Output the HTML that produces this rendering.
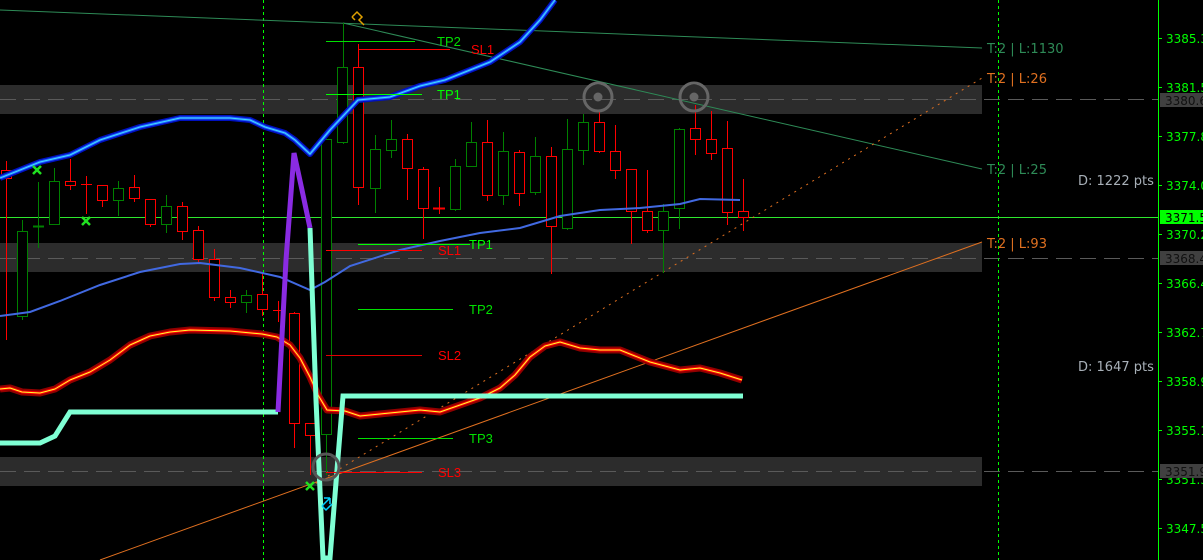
<!DOCTYPE html>
<html><head><meta charset="utf-8"><style>
html,body{margin:0;padding:0;background:#000;}
svg{display:block;font-family:"Liberation Sans",sans-serif;}
</style></head><body>
<svg width="1203" height="560" viewBox="0 0 1203 560" xmlns="http://www.w3.org/2000/svg">
<rect width="1203" height="560" fill="#000"/>
<rect x="0" y="85" width="982" height="29" fill="#2c2c2c"/>
<rect x="0" y="243" width="982" height="29" fill="#2c2c2c"/>
<rect x="0" y="457" width="982" height="29" fill="#2c2c2c"/>
<g stroke="#5a5a5a" stroke-width="1" stroke-dasharray="16,8">
<line x1="0" y1="99.5" x2="1158" y2="99.5"/>
<line x1="0" y1="258.5" x2="1158" y2="258.5"/>
<line x1="0" y1="471.5" x2="1158" y2="471.5"/>
</g>
<g stroke="#00ff00" stroke-width="1" stroke-dasharray="3,3" shape-rendering="crispEdges">
<line x1="263.5" y1="0" x2="263.5" y2="560"/>
<line x1="998.5" y1="0" x2="998.5" y2="560"/>
</g>
<line x1="0" y1="217.5" x2="1158" y2="217.5" stroke="#2ee82e" stroke-width="1"/>
<line x1="0" y1="10" x2="982" y2="48" stroke="#2e8b57" stroke-width="1"/>
<line x1="343" y1="23" x2="982" y2="169" stroke="#2e8b57" stroke-width="1"/>
<line x1="310" y1="487" x2="982" y2="78" stroke="#e07020" stroke-width="1" stroke-dasharray="2,5"/>
<line x1="100" y1="560" x2="982" y2="242" stroke="#e07020" stroke-width="1"/>
<g stroke-width="1" fill="#000" shape-rendering="crispEdges">
<g stroke="#ff0000">
<line x1="6.5" y1="161" x2="6.5" y2="340"/><rect x="1.5" y="170.5" width="10" height="8"/>
<line x1="70.5" y1="159" x2="70.5" y2="190"/><rect x="65.5" y="181.5" width="10" height="4"/>
<line x1="86.5" y1="176" x2="86.5" y2="214"/><line x1="81" y1="184.5" x2="92" y2="184.5"/>
<line x1="102.5" y1="185" x2="102.5" y2="207"/><rect x="97.5" y="185.5" width="10" height="15"/>
<line x1="134.5" y1="175" x2="134.5" y2="202"/><rect x="129.5" y="187.5" width="10" height="11"/>
<line x1="150.5" y1="199" x2="150.5" y2="227"/><rect x="145.5" y="199.5" width="10" height="25"/>
<line x1="182.5" y1="202" x2="182.5" y2="240"/><rect x="177.5" y="206.5" width="10" height="25"/>
<line x1="198.5" y1="226" x2="198.5" y2="263"/><rect x="193.5" y="230.5" width="10" height="29"/>
<line x1="214.5" y1="249" x2="214.5" y2="301"/><rect x="209.5" y="259.5" width="10" height="38"/>
<line x1="230.5" y1="290" x2="230.5" y2="308"/><rect x="225.5" y="297.5" width="10" height="5"/>
<line x1="262.5" y1="274" x2="262.5" y2="316"/><rect x="257.5" y="294.5" width="10" height="15"/>
<line x1="278.5" y1="301" x2="278.5" y2="322"/><line x1="273" y1="310.5" x2="284" y2="310.5"/>
<line x1="294.5" y1="312" x2="294.5" y2="448"/><rect x="289.5" y="313.5" width="10" height="110"/>
<line x1="310.5" y1="423" x2="310.5" y2="475"/><rect x="305.5" y="423.5" width="10" height="12"/>
<line x1="358.5" y1="44" x2="358.5" y2="205"/><rect x="353.5" y="67.5" width="10" height="120"/>
<line x1="407.5" y1="134" x2="407.5" y2="200"/><rect x="402.5" y="139.5" width="10" height="29"/>
<line x1="423.5" y1="167" x2="423.5" y2="239"/><rect x="418.5" y="169.5" width="10" height="39"/>
<line x1="439.5" y1="187" x2="439.5" y2="214"/><line x1="433" y1="208.5" x2="445" y2="208.5" stroke-width="2"/>
<line x1="487.5" y1="120" x2="487.5" y2="201"/><rect x="482.5" y="142.5" width="10" height="53"/>
<line x1="519.5" y1="150" x2="519.5" y2="206"/><rect x="514.5" y="152.5" width="10" height="41"/>
<line x1="551.5" y1="147" x2="551.5" y2="274"/><rect x="546.5" y="156.5" width="10" height="70"/>
<line x1="599.5" y1="110" x2="599.5" y2="153"/><rect x="594.5" y="122.5" width="10" height="29"/>
<line x1="615.5" y1="125" x2="615.5" y2="179"/><rect x="610.5" y="151.5" width="10" height="19"/>
<line x1="631.5" y1="169" x2="631.5" y2="244"/><rect x="626.5" y="169.5" width="10" height="42"/>
<line x1="647.5" y1="170" x2="647.5" y2="233"/><rect x="642.5" y="211.5" width="10" height="19"/>
<line x1="695.5" y1="105" x2="695.5" y2="155"/><rect x="690.5" y="128.5" width="10" height="11"/>
<line x1="711.5" y1="111" x2="711.5" y2="160"/><rect x="706.5" y="139.5" width="10" height="14"/>
<line x1="727.5" y1="121" x2="727.5" y2="225"/><rect x="722.5" y="148.5" width="10" height="64"/>
<line x1="743.5" y1="179" x2="743.5" y2="231"/><rect x="738.5" y="211.5" width="10" height="6"/>
</g>
<g stroke="#008000">
<line x1="22.5" y1="220" x2="22.5" y2="320"/><rect x="17.5" y="231.5" width="10" height="85"/>
<line x1="38.5" y1="182" x2="38.5" y2="248"/><line x1="33" y1="226.5" x2="44" y2="226.5" stroke-width="2"/>
<line x1="54.5" y1="168" x2="54.5" y2="224"/><rect x="49.5" y="181.5" width="10" height="43"/>
<line x1="118.5" y1="181" x2="118.5" y2="216"/><rect x="113.5" y="188.5" width="10" height="12"/>
<line x1="166.5" y1="195" x2="166.5" y2="233"/><rect x="161.5" y="206.5" width="10" height="18"/>
<line x1="246.5" y1="290" x2="246.5" y2="313"/><rect x="241.5" y="295.5" width="10" height="7"/>
<line x1="326.5" y1="139" x2="326.5" y2="475"/><rect x="321.5" y="139.5" width="10" height="295"/>
<line x1="343.5" y1="23" x2="343.5" y2="144"/><rect x="337.5" y="67.5" width="10" height="75"/>
<line x1="375.5" y1="135" x2="375.5" y2="213"/><rect x="370.5" y="149.5" width="10" height="39"/>
<line x1="391.5" y1="120" x2="391.5" y2="158"/><rect x="386.5" y="139.5" width="10" height="11"/>
<line x1="455.5" y1="159" x2="455.5" y2="211"/><rect x="450.5" y="166.5" width="10" height="43"/>
<line x1="471.5" y1="122" x2="471.5" y2="166"/><rect x="466.5" y="142.5" width="10" height="24"/>
<line x1="503.5" y1="132" x2="503.5" y2="205"/><rect x="498.5" y="151.5" width="10" height="44"/>
<line x1="535.5" y1="137" x2="535.5" y2="195"/><rect x="530.5" y="156.5" width="10" height="36"/>
<line x1="567.5" y1="119" x2="567.5" y2="230"/><rect x="562.5" y="149.5" width="10" height="79"/>
<line x1="583.5" y1="114" x2="583.5" y2="165"/><rect x="578.5" y="122.5" width="10" height="28"/>
<line x1="663.5" y1="204" x2="663.5" y2="273"/><rect x="658.5" y="211.5" width="10" height="19"/>
<line x1="679.5" y1="128" x2="679.5" y2="229"/><rect x="674.5" y="129.5" width="10" height="79"/>
</g>
</g>
<polyline fill="none" stroke="#4169e1" stroke-width="2" points="0,316 30,312 60,301 100,285 140,272 180,264 200,263 240,268 280,277 310,290 325,282 350,266 400,250 440,241 480,233 520,228 560,216 600,210 640,208 680,204 700,199 740,200"/>
<polyline fill="none" stroke="#0010c0" stroke-width="6" stroke-linejoin="round" points="0,178 40,162 70,155 100,140 140,127 180,118 230,118 250,120 265,127 285,133 295,140 310,154 330,130 358,100 390,97 420,86 445,80 490,62 520,42 540,20 555,0"/>
<polyline fill="none" stroke="#2060ff" stroke-width="3" stroke-linejoin="round" points="0,178 40,162 70,155 100,140 140,127 180,118 230,118 250,120 265,127 285,133 295,140 310,154 330,130 358,100 390,97 420,86 445,80 490,62 520,42 540,20 555,0"/>
<polyline fill="none" stroke="#40e0ff" stroke-width="1" points="0,178 40,162 70,155 100,140 140,127 180,118 230,118 250,120 265,127 285,133 295,140 310,154 330,130 358,100 390,97 420,86 445,80 490,62 520,42 540,20 555,0"/>
<g fill="none" stroke-linejoin="round">
<polyline stroke="#900000" stroke-width="7" points="0,389 10,388 22,392 40,393 55,389 70,380 90,372 110,360 130,345 150,336 170,332 190,330 230,331 262,334 277,337 290,345 300,358 310,377 318,395 327,410 345,411 360,416 380,414 420,410 440,412 460,405 480,398 500,388 515,375 530,357 545,346 560,342 580,348 600,350 620,350 650,362 680,370 700,368 720,373 742,380"/>
<polyline stroke="#ff0000" stroke-width="3" points="0,389 10,388 22,392 40,393 55,389 70,380 90,372 110,360 130,345 150,336 170,332 190,330 230,331 262,334 277,337 290,345 300,358 310,377 318,395 327,410 345,411 360,416 380,414 420,410 440,412 460,405 480,398 500,388 515,375 530,357 545,346 560,342 580,348 600,350 620,350 650,362 680,370 700,368 720,373 742,380"/>
<polyline stroke="#ffff30" stroke-width="1" points="0,389 10,388 22,392 40,393 55,389 70,380 90,372 110,360 130,345 150,336 170,332 190,330 230,331 262,334 277,337 290,345 300,358 310,377 318,395 327,410 345,411 360,416 380,414 420,410 440,412 460,405 480,398 500,388 515,375 530,357 545,346 560,342 580,348 600,350 620,350 650,362 680,370 700,368 720,373 742,380"/>
</g>
<polyline fill="none" stroke="#7fffd4" stroke-width="5" points="0,443 40,443 55,436 70,412 278,412"/>
<polyline fill="none" stroke="#8a2be2" stroke-width="5" points="278,412 286,260 294,153 302,190 310,228"/>
<polyline fill="none" stroke="#7fffd4" stroke-width="5" points="310,228 316,400 323,558 330,558 337,470 343,396 743,396"/>
<g stroke-width="1" shape-rendering="crispEdges">
<line x1="326" y1="41.5" x2="415" y2="41.5" stroke="#00e000"/>
<line x1="358" y1="49.5" x2="450" y2="49.5" stroke="#ff0000"/>
<line x1="326" y1="94.5" x2="422" y2="94.5" stroke="#00ff00"/>
<line x1="358" y1="244.5" x2="470" y2="244.5" stroke="#00ff00"/>
<line x1="326" y1="250.5" x2="422" y2="250.5" stroke="#ff0000"/>
<line x1="358" y1="309.5" x2="453" y2="309.5" stroke="#00e000"/>
<line x1="326" y1="355.5" x2="422" y2="355.5" stroke="#e00000"/>
<line x1="358" y1="438.5" x2="453" y2="438.5" stroke="#00e000"/>
<line x1="326" y1="472.5" x2="422" y2="472.5" stroke="#ff0000"/>
</g>
<g font-size="13">
<text x="437" y="46" fill="#00e000">TP2</text>
<text x="471" y="54" fill="#ff0000">SL1</text>
<text x="437" y="99" fill="#00ff00">TP1</text>
<text x="469" y="249" fill="#00ff00">TP1</text>
<text x="438" y="255" fill="#ff0000">SL1</text>
<text x="469" y="314" fill="#00e000">TP2</text>
<text x="438" y="360" fill="#ff0000">SL2</text>
<text x="469" y="443" fill="#00e000">TP3</text>
<text x="438" y="477" fill="#ff0000">SL3</text>
</g>
<g fill="none" stroke="#666" stroke-width="3">
<circle cx="598" cy="97" r="14"/>
<circle cx="694" cy="97" r="14"/>
<circle cx="326" cy="467" r="13" stroke="#555"/>
</g>
<circle cx="598" cy="97" r="4.5" fill="#666"/>
<circle cx="694" cy="97" r="4.5" fill="#666"/>
<g stroke="#20e020" stroke-width="2.5">
<path d="M33 166 L41 174 M41 166 L33 174"/>
<path d="M82 217 L90 225 M90 217 L82 225"/>
<path d="M306 482 L314 490 M314 482 L306 490"/>
</g>
<path d="M352 17 L357 12 L362 17 L359 20 L364 25 M352 17 L355 20" fill="none" stroke="#e0a000" stroke-width="1.5"/>
<path d="M322 506 L330 498 M330 498 L324 498 M330 498 L330 504 M322 506 L326 510 L332 504" fill="none" stroke="#00d0ff" stroke-width="1.5"/>
<g font-size="13" font-family="DejaVu Sans, sans-serif">
<text x="987" y="53" fill="#2e8b57">T:2 | L:1130</text>
<text x="987" y="83" fill="#e07020">T:2 | L:26</text>
<text x="987" y="174" fill="#2e8b57">T:2 | L:25</text>
<text x="987" y="248" fill="#e07020">T:2 | L:93</text>
<text x="1078" y="185" fill="#a8b0b8">D: 1222 pts</text>
<text x="1078" y="371" fill="#a8b0b8">D: 1647 pts</text>
</g>
<line x1="1158.5" y1="0" x2="1158.5" y2="560" stroke="#00ff00" stroke-width="1"/>
<g stroke="#00ff00" stroke-width="1">
<line x1="1158" y1="38.5" x2="1162" y2="38.5"/><line x1="1158" y1="87.5" x2="1162" y2="87.5"/>
<line x1="1158" y1="136.5" x2="1162" y2="136.5"/><line x1="1158" y1="185.5" x2="1162" y2="185.5"/>
<line x1="1158" y1="234.5" x2="1162" y2="234.5"/><line x1="1158" y1="283.5" x2="1162" y2="283.5"/>
<line x1="1158" y1="332.5" x2="1162" y2="332.5"/><line x1="1158" y1="381.5" x2="1162" y2="381.5"/>
<line x1="1158" y1="430.5" x2="1162" y2="430.5"/><line x1="1158" y1="479.5" x2="1162" y2="479.5"/>
<line x1="1158" y1="528.5" x2="1162" y2="528.5"/>
</g>
<g font-size="12" fill="#00ff00" font-family="DejaVu Sans, sans-serif">
<text x="1166" y="43">3385.3</text>
<text x="1166" y="92">3381.5</text>
<text x="1166" y="141">3377.8</text>
<text x="1166" y="190">3374.0</text>
<text x="1166" y="239">3370.2</text>
<text x="1166" y="288">3366.4</text>
<text x="1166" y="337">3362.7</text>
<text x="1166" y="386">3358.9</text>
<text x="1166" y="435">3355.1</text>
<text x="1166" y="484">3351.3</text>
<text x="1166" y="533">3347.5</text>
</g>
<g font-size="12" font-family="DejaVu Sans, sans-serif">
<rect x="1160" y="93" width="43" height="14" fill="#404040"/>
<text x="1165" y="105" fill="#101010">3380.6</text>
<rect x="1160" y="210" width="43" height="14" fill="#00ff00"/>
<text x="1165" y="222" fill="#000">3371.5</text>
<rect x="1160" y="251" width="43" height="14" fill="#404040"/>
<text x="1165" y="263" fill="#101010">3368.4</text>
<rect x="1160" y="464" width="43" height="14" fill="#404040"/>
<text x="1165" y="476" fill="#101010">3351.9</text>
</g>
</svg>
</body></html>
